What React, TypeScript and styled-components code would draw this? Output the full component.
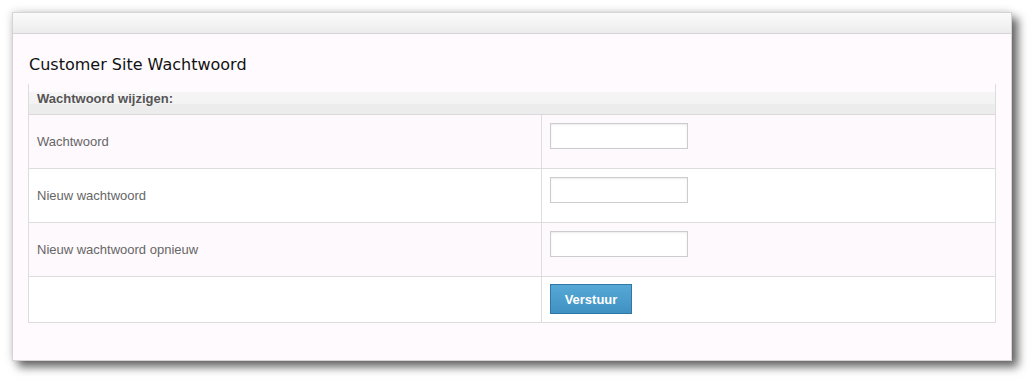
import React from "react";
import styled, { createGlobalStyle } from "styled-components";

const Global = createGlobalStyle`
  html, body { margin: 0; padding: 0; background: #ffffff; }
  body { font-family: "Liberation Sans", Arial, sans-serif; }
`;

const Page = styled.div`
  padding: 12px 21px 21px 12px;
  width: 1032px;
  height: 382px;
  box-sizing: border-box;
`;

const Panel = styled.div`
  width: 1000px;
  height: 349px;
  background: #fefafd;
  border: 1px solid #d6d2d6;
  box-sizing: border-box;
  box-shadow: 6px 6px 9px rgba(0, 0, 0, 0.6), -1px -1px 8px rgba(0, 0, 0, 0.12);
  display: flex;
  flex-direction: column;
`;

const TopBar = styled.div`
  height: 20px;
  background: linear-gradient(#fafafa 0%, #f5f4f5 50%, #ececec 100%);
  border-bottom: 1px solid #d6d2d6;
`;

const Content = styled.div`
  padding: 22px 15px 0 15px;
  display: flex;
  flex-direction: column;
`;

const Title = styled.h1`
  margin: 0 0 11px 1px;
  font-family: "DejaVu Sans", Verdana, sans-serif;
  font-weight: normal;
  font-size: 16px;
  line-height: 17px;
  color: #111;
`;

const Table = styled.div`
  border-left: 1px solid #dddddd;
  border-right: 1px solid #dddddd;
  border-bottom: 1px solid #dddddd;
  display: flex;
  flex-direction: column;
`;

const Header = styled.div`
  height: 31px;
  box-sizing: border-box;
  border-bottom: 1px solid #dcd8dc;
  background: linear-gradient(
    transparent 0px,
    transparent 8px,
    #f6f5f6 8px,
    #f4f3f4 20px,
    #ececec 20px,
    #ececec 31px
  );
  padding: 8px 0 0 8px;
  font-weight: bold;
  font-size: 13px;
  color: #555;
  line-height: 14px;
`;

const Row = styled.div<{ $alt: boolean; $last?: boolean }>`
  display: grid;
  grid-template-columns: 513px 1fr;
  background: ${(p) => (p.$alt ? "#fef9fd" : "#ffffff")};
  border-bottom: ${(p) => (p.$last ? "none" : "1px solid #dddddd")};
  height: ${(p) => (p.$last ? "45px" : "53px")};
`;

const LabelCell = styled.div`
  border-right: 1px solid #dddddd;
  display: flex;
  align-items: center;
  padding-left: 8px;
  font-size: 13px;
  color: #666;
`;

const FieldCell = styled.div`
  padding: 8px 0 0 8px;
`;

const Input = styled.input`
  width: 138px;
  height: 26px;
  box-sizing: border-box;
  border: 1px solid #cccccc;
  background: #fff;
  box-shadow: inset 0 1px 2px rgba(0, 0, 0, 0.08);
  padding: 0 4px;
  margin: 0;
  display: block;
  outline: none;
`;

const Button = styled.button`
  width: 82px;
  height: 30px;
  margin-top: -1px;
  box-sizing: border-box;
  border: 1px solid #2f78a6;
  background: linear-gradient(#56a9d6, #3f91c2);
  color: #fff;
  font-family: "Liberation Sans", Arial, sans-serif;
  font-weight: bold;
  font-size: 13px;
  cursor: pointer;
  padding: 0;
`;

const fields = ["Wachtwoord", "Nieuw wachtwoord", "Nieuw wachtwoord opnieuw"];

export default function App() {
  return (
    <>
      <Global />
      <Page>
        <Panel>
          <TopBar />
          <Content>
            <Title>Customer Site Wachtwoord</Title>
            <Table>
              <Header>Wachtwoord wijzigen:</Header>
              {fields.map((f, i) => (
                <Row key={f} $alt={i % 2 === 0}>
                  <LabelCell>{f}</LabelCell>
                  <FieldCell>
                    <Input type="password" />
                  </FieldCell>
                </Row>
              ))}
              <Row $alt={false} $last>
                <LabelCell />
                <FieldCell>
                  <Button>Verstuur</Button>
                </FieldCell>
              </Row>
            </Table>
          </Content>
        </Panel>
      </Page>
    </>
  );
}
